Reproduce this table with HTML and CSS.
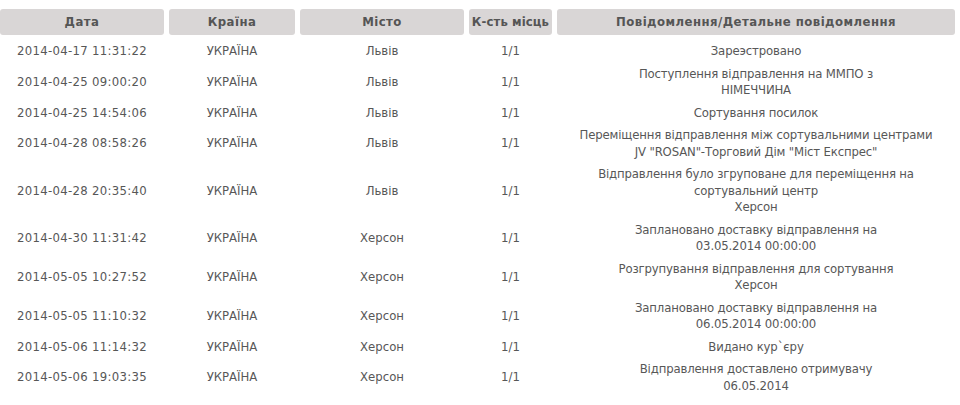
FILE: index.html
```html
<!DOCTYPE html>
<html lang="uk">
<head>
<meta charset="utf-8">
<title>Відстеження</title>
<link rel="stylesheet" href="styles.css">
</head>
<body>
<div class="track" role="table">
  <div class="row head" role="row">
    <div class="cell" role="columnheader">Дата</div>
    <div class="cell" role="columnheader">Країна</div>
    <div class="cell" role="columnheader">Місто</div>
    <div class="cell tight" role="columnheader">К-сть місць</div>
    <div class="cell" role="columnheader">Повідомлення/Детальне повідомлення</div>
  </div>
  <div class="row" role="row">
    <div class="cell">2014-04-17 11:31:22</div><div class="cell">УКРАЇНА</div><div class="cell">Львів</div><div class="cell">1/1</div><div class="cell">Зареэстровано</div>
  </div>
  <div class="row" role="row">
    <div class="cell">2014-04-25 09:00:20</div><div class="cell">УКРАЇНА</div><div class="cell">Львів</div><div class="cell">1/1</div><div class="cell">Поступлення відправлення на ММПО з<br>НІМЕЧЧИНА</div>
  </div>
  <div class="row" role="row">
    <div class="cell">2014-04-25 14:54:06</div><div class="cell">УКРАЇНА</div><div class="cell">Львів</div><div class="cell">1/1</div><div class="cell">Сортування посилок</div>
  </div>
  <div class="row" role="row">
    <div class="cell">2014-04-28 08:58:26</div><div class="cell">УКРАЇНА</div><div class="cell">Львів</div><div class="cell">1/1</div><div class="cell">Переміщення відправлення між сортувальними центрами<br>JV "ROSAN"-Торговий Дім "Міст Експрес"</div>
  </div>
  <div class="row" role="row">
    <div class="cell">2014-04-28 20:35:40</div><div class="cell">УКРАЇНА</div><div class="cell">Львів</div><div class="cell">1/1</div><div class="cell">Відправлення було згруповане для переміщення на<br>сортувальний центр<br>Херсон</div>
  </div>
  <div class="row" role="row">
    <div class="cell">2014-04-30 11:31:42</div><div class="cell">УКРАЇНА</div><div class="cell">Херсон</div><div class="cell">1/1</div><div class="cell">Заплановано доставку відправлення на<br>03.05.2014 00:00:00</div>
  </div>
  <div class="row" role="row">
    <div class="cell">2014-05-05 10:27:52</div><div class="cell">УКРАЇНА</div><div class="cell">Херсон</div><div class="cell">1/1</div><div class="cell">Розгрупування відправлення для сортування<br>Херсон</div>
  </div>
  <div class="row" role="row">
    <div class="cell">2014-05-05 11:10:32</div><div class="cell">УКРАЇНА</div><div class="cell">Херсон</div><div class="cell">1/1</div><div class="cell">Заплановано доставку відправлення на<br>06.05.2014 00:00:00</div>
  </div>
  <div class="row" role="row">
    <div class="cell">2014-05-06 11:14:32</div><div class="cell">УКРАЇНА</div><div class="cell">Херсон</div><div class="cell">1/1</div><div class="cell">Видано кур`єру</div>
  </div>
  <div class="row" role="row">
    <div class="cell">2014-05-06 19:03:35</div><div class="cell">УКРАЇНА</div><div class="cell">Херсон</div><div class="cell">1/1</div><div class="cell">Відправлення доставлено отримувачу<br>06.05.2014</div>
  </div>
</div>
</body>
</html>
```

FILE: styles.css
```css
html, body {
  margin: 0;
  background: #ffffff;
}
body {
  padding-top: 9px;
  font-family: "DejaVu Sans Condensed", "DejaVu Sans", sans-serif;
  font-size: 13px;
  color: #575757;
}
.track {
  width: 955px;
  display: flex;
  flex-direction: column;
}
.row {
  display: grid;
  grid-template-columns: 164px 126px 164px 83px 398px;
  column-gap: 5px;
}
.cell {
  display: flex;
  align-items: center;
  justify-content: center;
  text-align: center;
  padding: 3px 0;
  line-height: 16.5px;
  white-space: nowrap;
}
.row .cell:first-child {
  letter-spacing: 0.3px;
}
.row .cell:last-child {
  letter-spacing: -0.15px;
}
.head {
  margin-bottom: 5px;
}
.head .cell,
.head .cell:first-child,
.head .cell:last-child {
  height: 26px;
  padding: 0;
  box-sizing: border-box;
  background: #d9d6d6;
  border-radius: 3px;
  font-weight: bold;
  color: #555555;
  letter-spacing: 0.45px;
}
.head .cell.tight {
  letter-spacing: 0.1px;
}
```
